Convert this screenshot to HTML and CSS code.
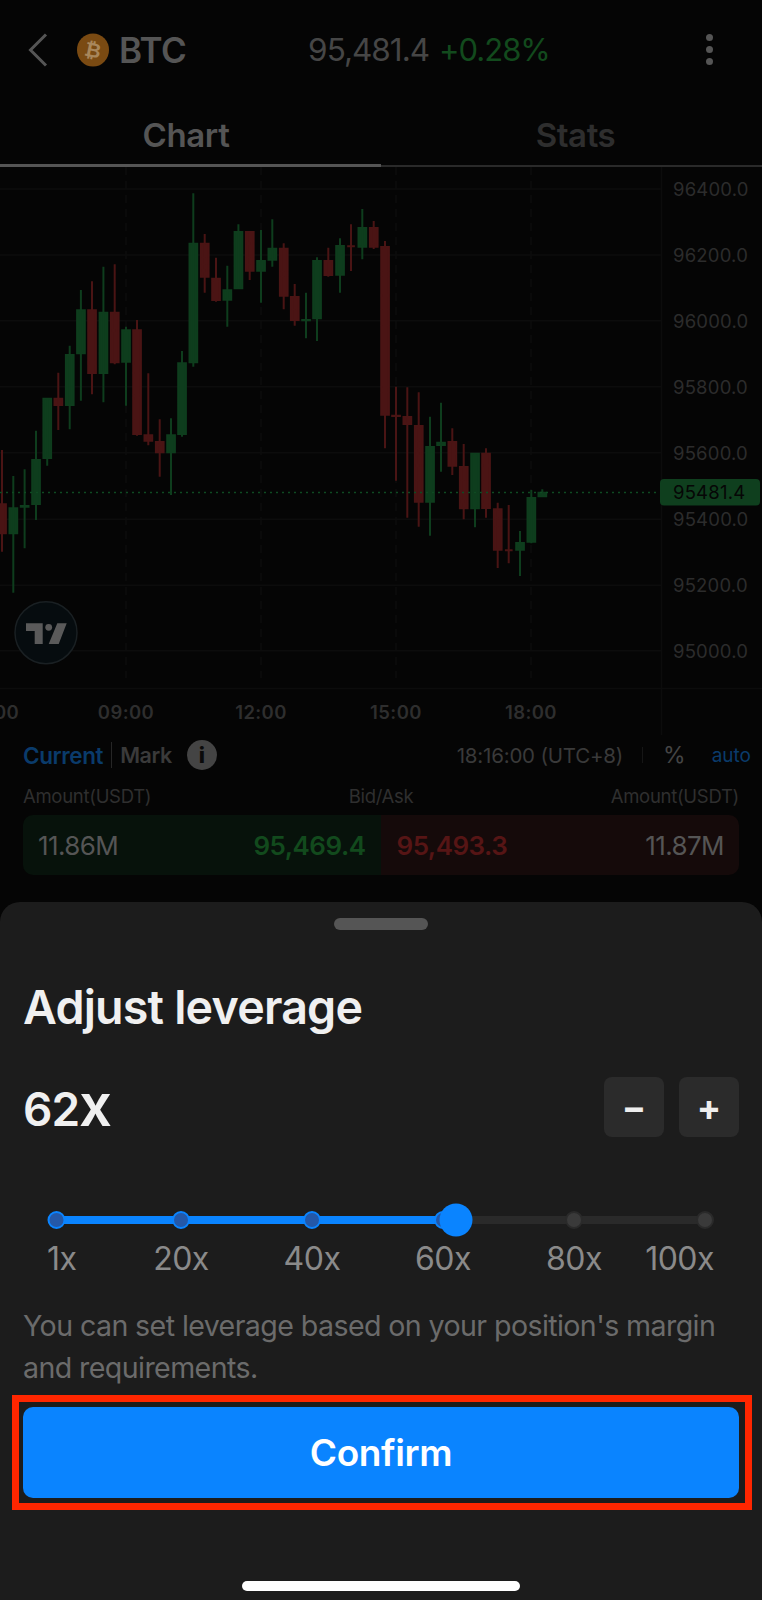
FILE: index.html
```html
<!DOCTYPE html>
<html lang="en">
<head>
  <meta charset="UTF-8">
  <meta name="viewport" content="width=device-width, initial-scale=1.0">
  <title>Adjust leverage</title>
  <link rel="stylesheet" href="styles.css">
</head>
<body>
  <div class="screen">
    <header class="topbar">
      <svg class="back" width="20" height="34" viewBox="0 0 20 34"><path d="M18 1.5 2.5 17 18 32.5"/></svg>
      <svg class="coin" width="32" height="34" viewBox="0 0 32 34">
        <ellipse cx="16" cy="17" rx="16" ry="16.5"/>
        <text x="16" y="24" transform="rotate(12 16 17)">₿</text>
      </svg>
      <span class="symbol">BTC</span>
      <span class="last-price">95,481.4</span>
      <span class="change">+0.28%</span>
      <span class="more"><i></i><i></i><i></i></span>
    </header>

    <nav class="tabs">
      <span class="tab tab-active">Chart</span>
      <span class="tab tab-right">Stats</span>
    </nav>

    <svg class="chart" width="762" height="568" viewBox="0 167 762 568">
      <path class="grid" d="M0 189H661M0 255H661M0 320.7H661M0 386.7H661M0 452.7H661M0 519.3H661M0 585.3H661M0 650.7H661M0 688.5H762M661.5 167V735"/>
      <path class="grid grid-dash" d="M126 167V678M261 167V678M396 167V678M531 167V678"/>
      <path class="wick-up" d="M13.3 476V592.7M9.5 508.3h7.7V533.3h-7.7zM24.6 469.3V548.3M20.8 506h7.7V506.7h-7.7zM36 430.7V520M32.2 460h7.7V504h-7.7zM47.2 398V465.7M43.4 398.7h7.7V458h-7.7zM69.7 345.7V429.3M65.9 355h7.7V405h-7.7zM80.9 290V400.7M77.1 310.3h7.7V353.3h-7.7zM103.4 266.7V402.3M99.6 312.7h7.7V373h-7.7zM126 326.7V405.7M122.2 330.3h7.7V361.7h-7.7zM171 418.3V495M167.2 435.3h7.7V452.3h-7.7zM182 351V436.7M178.2 363.3h7.7V434h-7.7zM193.3 193.3V366.7M189.5 243.7h7.7V362.3h-7.7zM227.3 265.7V326.7M223.5 290.3h7.7V299.7h-7.7zM238.4 224.3V289.3M234.6 232h7.7V288.3h-7.7zM261 230V302.7M257.2 261h7.7V270.7h-7.7zM272.3 219.3V266.7M268.5 248.7h7.7V259.7h-7.7zM306 292.7V338.3M302.2 320h7.7V320.3h-7.7zM317 257.3V341M313.2 261h7.7V318.3h-7.7zM340 238.3V292.7M336.2 246h7.7V274.7h-7.7zM362.3 209V259.3M358.5 228h7.7V246.7h-7.7zM430 416.7V535.7M426.2 447h7.7V501.7h-7.7zM441 402.7V471.7M437.2 442.7h7.7V445h-7.7zM475 452.7V527.3M471.2 453.7h7.7V508.3h-7.7zM520 531V576M516.2 543h7.7V549.7h-7.7zM531.3 490V543.3M527.5 498h7.7V541.7h-7.7zM542.3 489.3V497.3M538.5 492.7h7.7V496.3h-7.7z"/>
      <path class="wick-down" d="M2 450V551.7M-1.8 504.3h7.7V533.3h-7.7zM58.3 372.7V430M54.5 398.7h7.7V405h-7.7zM92 281.3V394.3M88.2 310.3h7.7V373h-7.7zM114.7 264.3V364.3M110.9 312.7h7.7V362.3h-7.7zM137 320V435.7M133.2 330.3h7.7V434h-7.7zM148.3 373.3V445.3M144.5 435.3h7.7V440.7h-7.7zM159.7 419.3V476.7M155.9 442h7.7V452.3h-7.7zM204.7 234V292.7M200.9 243.7h7.7V276.7h-7.7zM216 257.7V301.7M212.2 278.7h7.7V300h-7.7zM249.7 231V280M245.9 232h7.7V270.7h-7.7zM283.7 243.3V309.3M279.9 248.7h7.7V295.7h-7.7zM294.7 284V325.7M290.9 297h7.7V320h-7.7zM328.3 247.7V276.7M324.5 261h7.7V275h-7.7zM351 224.3V271M347.2 246.3h7.7V246.3h-7.7zM373.7 221V249M369.9 228h7.7V246.7h-7.7zM385 241V448.3M381.2 247h7.7V414.7h-7.7zM396 386.7V480.7M392.2 415.7h7.7V416h-7.7zM407.3 387.3V517.7M403.5 417h7.7V424h-7.7zM418.7 392.3V526.7M414.9 426h7.7V501.7h-7.7zM452.3 428.3V475M448.5 442h7.7V465.7h-7.7zM463.7 444V519.3M459.9 467h7.7V508.3h-7.7zM486 448.3V517.7M482.2 453.7h7.7V508h-7.7zM497.7 502.7V568M493.9 509.3h7.7V549.7h-7.7zM508.7 505V563.3M504.9 550.3h7.7V550.3h-7.7z"/>
      <path class="last-line" d="M0 492.5H660"/>

      <rect class="last-tag" x="660" y="479" width="100" height="26.5" rx="4"/>
      <g class="axis-price">
        <text x="673" y="195.5">96400.0</text>
        <text x="673" y="261.5">96200.0</text>
        <text x="673" y="327.5">96000.0</text>
        <text x="673" y="393.5">95800.0</text>
        <text x="673" y="459.5">95600.0</text>
        <text class="last-tag-text" x="673" y="499">95481.4</text>
        <text x="673" y="526">95400.0</text>
        <text x="673" y="592">95200.0</text>
        <text x="673" y="657.5">95000.0</text>
      </g>
      <g class="axis-time">
        <text x="-9" y="719">06:00</text>
        <text x="126" y="719">09:00</text>
        <text x="261" y="719">12:00</text>
        <text x="396" y="719">15:00</text>
        <text x="531" y="719">18:00</text>
      </g>

      <circle class="tv-badge" cx="46" cy="632.7" r="31"/>
      <path class="tv-mark" d="M26 623.3H42.7V644H34.7V631H26ZM66.7 623.3H57.3L48.7 644H58.7Z"/>
      <circle class="tv-mark" cx="48.7" cy="627.3" r="3.4"/>
    </svg>

    <section class="quote">
      <div class="quote-head">
        <span class="price-type price-type-on">Current</span>
        <span class="price-type-sep"></span>
        <span class="price-type price-type-off">Mark</span>
        <span class="info">i</span>
        <span class="clock">18:16:00 (UTC+8)</span>
        <span class="clock-sep"></span>
        <span class="percent">%</span>
        <span class="auto">auto</span>
      </div>
      <div class="quote-labels">
        <span>Amount(USDT)</span>
        <span>Bid/Ask</span>
        <span>Amount(USDT)</span>
      </div>
      <div class="book">
        <div class="book-side book-bid">
          <span class="book-amount">11.86M</span>
          <span class="book-price price-bid">95,469.4</span>
        </div>
        <div class="book-side book-ask">
          <span class="book-price price-ask">95,493.3</span>
          <span class="book-amount">11.87M</span>
        </div>
      </div>
    </section>

    <section class="sheet">
      <div class="handle"></div>
      <h1 class="sheet-title">Adjust leverage</h1>
      <div class="leverage">
        <span class="leverage-value">62<span class="leverage-x">x</span></span>
        <div class="steppers">
          <button class="stepper" type="button">−</button>
          <button class="stepper" type="button">+</button>
        </div>
      </div>

      <svg class="slider" width="716" height="34" viewBox="23 1203 716 34">
        <path class="track" d="M56 1220H705"/>
        <path class="track track-on" d="M56 1220H456"/>
        <circle class="tick tick-on" cx="56.5" cy="1220" r="8"/>
        <circle class="tick tick-on" cx="181" cy="1220" r="8"/>
        <circle class="tick tick-on" cx="312" cy="1220" r="8"/>
        <circle class="tick tick-on" cx="443" cy="1220" r="8"/>
        <circle class="tick" cx="574" cy="1220" r="8"/>
        <circle class="tick" cx="705" cy="1220" r="8"/>
        <circle class="thumb" cx="456" cy="1220" r="16.5"/>
      </svg>
      <div class="slider-labels">
        <span>1x</span>
        <span>20x</span>
        <span>40x</span>
        <span>60x</span>
        <span>80x</span>
        <span>100x</span>
      </div>

      <p class="hint">You can set leverage based on your position's margin and requirements.</p>

      <div class="confirm-frame">
        <button class="confirm" type="button">Confirm</button>
      </div>

      <div class="home-bar"></div>
    </section>
  </div>
</body>
</html>
```

FILE: styles.css
```css
* {
  box-sizing: border-box;
}

body {
  margin: 0;
  background: #050505;
  font-family: Inter, "Liberation Sans", sans-serif;
}

.screen {
  width: 762px;
  height: 1600px;
  overflow: hidden;
  display: flex;
  flex-direction: column;
  background: #050505;
}

/* top bar */
.topbar {
  height: 99px;
  display: flex;
  align-items: center;
  color: #555;
}

.back {
  margin-left: 28px;
  fill: none;
  stroke: #555;
  stroke-width: 3;
}

.coin {
  margin-left: 29px;
  fill: #7a4a12;
}

.coin text {
  fill: #a8875c;
  font-family: "DejaVu Sans", sans-serif;
  font-size: 20px;
  font-weight: 700;
  text-anchor: middle;
}

.symbol {
  margin-left: 10px;
  font-size: 35px;
  font-weight: 600;
  letter-spacing: -0.6px;
}

.last-price {
  margin-left: 122px;
  font-size: 31.5px;
  letter-spacing: -1px;
  color: #464646;
}

.change {
  margin-left: 10px;
  font-size: 31px;
  letter-spacing: -1px;
  color: #124a1d;
}

.more {
  margin-left: auto;
  margin-right: 49px;
  display: flex;
  flex-direction: column;
  gap: 5px;
}

.more i {
  width: 7px;
  height: 7px;
  border-radius: 50%;
  background: #555;
}

/* tabs */
.tabs {
  height: 68px;
  display: flex;
  border-bottom: 2px solid #2a2a2a;
}

.tab {
  flex: 0 0 50%;
  text-align: center;
  padding-top: 16px;
  font-size: 33px;
  font-weight: 600;
  letter-spacing: -0.4px;
  color: #2e2e2e;
}

.tab-active {
  height: 68px;
  padding-right: 9px;
  border-bottom: 3px solid #555;
  color: #555;
}

.tab-right {
  padding-left: 8px;
}

/* chart */
.chart {
  display: block;
  flex: none;
}

.grid {
  fill: none;
  stroke: #0c0c0c;
  stroke-width: 1.5;
}

.grid-dash {
  stroke-dasharray: 8 6;
}

.wick-up,
.wick-down {
  stroke-width: 2;
}

.wick-up {
  fill: #0e3d1d;
  stroke: #0e3d1d;
}

.wick-down {
  fill: #4a1414;
  stroke: #4a1414;
}

.last-line {
  fill: none;
  stroke: #0f4a22;
  stroke-width: 1.5;
  stroke-dasharray: 2 4;
}

.last-tag {
  fill: #0f3f1e;
}

.axis-price text {
  font-size: 18.5px;
  letter-spacing: 0.2px;
  fill: #2c2c2c;
}

.axis-price .last-tag-text {
  fill: #060606;
}

.axis-time text {
  font-size: 18.5px;
  font-weight: 600;
  letter-spacing: 0.4px;
  fill: #2e2e2e;
  text-anchor: middle;
}

.tv-badge {
  fill: #060c0f;
  stroke: #1a2023;
  stroke-width: 1.5;
}

.tv-mark {
  fill: #5a5a5a;
}

/* bid / ask */
.quote {
  height: 167px;
  padding: 0 23px;
}

.quote-head {
  height: 40px;
  display: flex;
  align-items: center;
}

.price-type {
  font-size: 22.5px;
  font-weight: 600;
  letter-spacing: -0.4px;
  color: #3a3a3a;
}

.price-type-on {
  color: #0a3b6b;
}

.price-type-off {
  font-size: 21.5px;
}

.price-type-sep {
  width: 1px;
  height: 26px;
  margin: 0 8px;
  background: #262626;
}

.info {
  width: 30px;
  height: 30px;
  margin-left: 15px;
  border-radius: 50%;
  background: #444;
  color: #0a0a0a;
  font-size: 22px;
  font-weight: 800;
  line-height: 30px;
  text-align: center;
}

.clock {
  margin-left: auto;
  font-size: 20.5px;
  letter-spacing: -0.2px;
  color: #3a3a3a;
}

.clock-sep {
  width: 1px;
  height: 16px;
  margin: 0 20px 0 19px;
  background: #161616;
}

.percent {
  font-size: 23px;
  color: #444;
}

.auto {
  margin-left: 26px;
  margin-right: -12px;
  font-size: 19px;
  color: #0a3b6b;
}

.quote-labels {
  height: 40px;
  padding-top: 10px;
  display: flex;
  justify-content: space-between;
  font-size: 18.5px;
  letter-spacing: -0.3px;
  color: #2f2f2f;
}

.book {
  height: 60px;
  display: flex;
}

.book-side {
  flex: 1;
  padding: 0 15px;
  display: flex;
  align-items: center;
  justify-content: space-between;
}

.book-bid {
  background: #07120b;
  border-radius: 10px 0 0 10px;
}

.book-ask {
  background: #150a0a;
  border-radius: 0 10px 10px 0;
  padding-left: 16px;
}

.book-amount {
  font-size: 26px;
  letter-spacing: -0.6px;
  color: #555;
}

.book-price {
  font-size: 26px;
  font-weight: 600;
  letter-spacing: -0.5px;
}

.price-bid {
  color: #124a1d;
}

.price-ask {
  color: #561515;
}

/* leverage sheet */
.sheet {
  flex: 1;
  padding: 16px 23px 0;
  background: #1c1c1c;
  border-radius: 20px 20px 0 0;
  color: #f0f0f0;
}

.handle {
  width: 94px;
  height: 12px;
  margin: 0 auto;
  border-radius: 6px;
  background: #555;
}

.sheet-title {
  margin: 50px 0 0;
  font-size: 46.6px;
  font-weight: 600;
  line-height: 54px;
  letter-spacing: -0.8px;
}

.leverage {
  margin-top: 41px;
  display: flex;
  align-items: center;
  justify-content: space-between;
}

.leverage-value {
  font-size: 46px;
  font-weight: 600;
  line-height: 60px;
  letter-spacing: -1px;
}

.leverage-x {
  font-size: 58px;
  letter-spacing: 0;
}

.steppers {
  display: flex;
  gap: 15px;
}

.stepper {
  width: 60px;
  height: 60px;
  padding: 0;
  border: 0;
  border-radius: 8px;
  background: #2b2b2b;
  color: #eee;
  font-family: inherit;
  font-size: 36px;
  font-weight: 700;
}

.slider {
  display: block;
  margin-top: 64px;
}

.track {
  fill: none;
  stroke: #2a2a2a;
  stroke-width: 8;
}

.track-on {
  stroke: #0a84ff;
}

.tick {
  fill: #3a3a3a;
  stroke: #2a2a2a;
  stroke-width: 2;
}

.tick-on {
  fill: #2458a8;
  stroke: #0a84ff;
}

.thumb {
  fill: #0a84ff;
}

.slider-labels {
  display: grid;
  grid-template-columns: 68px 132px 130px 132px 130px 75px;
  padding-left: 24px;
  margin-top: 4px;
  font-size: 32px;
  line-height: 36px;
  letter-spacing: -0.5px;
  text-align: center;
  color: #8a8a8a;
}

.slider-labels span:first-child {
  text-align: left;
}

.slider-labels span:last-child {
  text-align: right;
}

.hint {
  margin: 28px 0 0;
  font-size: 28.6px;
  line-height: 42px;
  letter-spacing: -0.6px;
  color: #6b6b6b;
}

.confirm-frame {
  margin: 6px -13px 0 -11px;
  padding: 5px 6px 5px 4px;
  border: 7px solid #ff2600;
}

.confirm {
  display: block;
  width: 100%;
  height: 91px;
  padding: 0;
  border: 0;
  border-radius: 10px;
  background: #0a84ff;
  color: #fff;
  font-family: inherit;
  font-size: 37px;
  font-weight: 600;
  letter-spacing: -0.4px;
}

.home-bar {
  width: 278px;
  height: 10px;
  margin: 71px auto 0;
  border-radius: 5px;
  background: #fff;
}
```
